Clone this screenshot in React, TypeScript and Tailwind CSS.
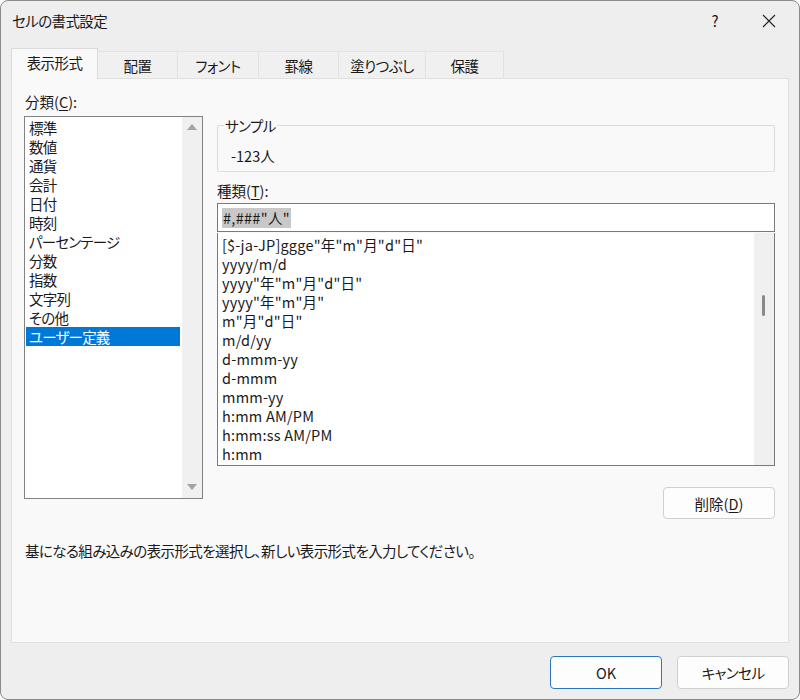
import React from "react";

const categories = [
  "標準",
  "数値",
  "通貨",
  "会計",
  "日付",
  "時刻",
  "パーセンテージ",
  "分数",
  "指数",
  "文字列",
  "その他",
  "ユーザー定義",
];

const formats = [
  '[$-ja-JP]ggge"年"m"月"d"日"',
  "yyyy/m/d",
  'yyyy"年"m"月"d"日"',
  'yyyy"年"m"月"',
  'm"月"d"日"',
  "m/d/yy",
  "d-mmm-yy",
  "d-mmm",
  "mmm-yy",
  "h:mm AM/PM",
  "h:mm:ss AM/PM",
  "h:mm",
];

const tabs = [
  { label: "配置", w: "w-[80px]" },
  { label: "フォント", w: "w-[81px]" },
  { label: "罫線", w: "w-[80px]" },
  { label: "塗りつぶし", w: "w-[87px]" },
  { label: "保護", w: "w-[78px]" },
];

function UpArrow() {
  return (
    <svg width="10" height="6" viewBox="0 0 10 6">
      <path d="M0 6 L5 0 L10 6 Z" fill="#a3a3a3" />
    </svg>
  );
}

function DownArrow() {
  return (
    <svg width="10" height="6" viewBox="0 0 10 6">
      <path d="M0 0 L10 0 L5 6 Z" fill="#a3a3a3" />
    </svg>
  );
}

export default function App() {
  return (
    <div className="w-[800px] h-[700px] bg-[#eeeeee] rounded-[8px] border border-[#8a8a8a] overflow-hidden flex flex-col text-[14.5px] leading-[19px] text-[#1a1a1a] font-['Noto_Sans_CJK_JP','Noto_Sans',sans-serif] [font-feature-settings:'palt']">
      {/* Title bar */}
      <div className="h-[39px] flex items-center pl-[11px] shrink-0">
        <span className="tracking-[-0.6px]">セルの書式設定</span>
        <div className="flex-1" />
        <span className="w-[20px] text-center mr-[37px] text-[15px]">?</span>
        <svg width="14" height="14" viewBox="0 0 14 14" className="mr-[23px]">
          <path d="M1 1 L13 13 M13 1 L1 13" stroke="#222" strokeWidth="1.1" />
        </svg>
      </div>

      {/* Tabs */}
      <div className="h-[38px] flex items-end pl-[10px] shrink-0 tracking-[-0.6px]">
        <div className="relative z-10 h-[31px] mb-[-1px] w-[87px] bg-[#f9f9f9] border border-b-0 border-[#dcdcdc] flex items-center justify-center pb-[3px]">
          表示形式
        </div>
        {tabs.map((t) => (
          <div
            key={t.label}
            className={`h-[27px] ${t.w} bg-[#f0f0f0] border-t border-r border-[#e2e2e2] flex items-center justify-center pt-[1px]`}
          >
            {t.label}
          </div>
        ))}
      </div>

      {/* Panel */}
      <div className="mx-[10px] h-[565px] shrink-0 bg-[#f9f9f9] border border-[#dfdfdf] pt-[13px] pl-[12px] flex flex-col">
        <div className="flex gap-[14px]">
          {/* Left column */}
          <div className="w-[179px] flex flex-col">
            <div className="h-[19px] pl-[1px]">
              分類(<span className="underline underline-offset-2">C</span>):
            </div>
            <div className="mt-[5px] h-[383px] bg-white border border-[#828282] flex">
              <div className="flex-1 pt-[1px] pl-[1px] pr-[2px] tracking-[-0.8px]">
                {categories.map((c, i) => (
                  <div
                    key={c}
                    className={`h-[19px] pl-[3px] ${
                      i === categories.length - 1 ? "bg-[#0078d7] text-white" : ""
                    }`}
                  >
                    {c}
                  </div>
                ))}
              </div>
              <div className="w-[20px] bg-[#f0f0f0] flex flex-col items-center justify-between pt-[7px] pb-[8px]">
                <UpArrow />
                <DownArrow />
              </div>
            </div>
          </div>

          {/* Right column */}
          <div className="w-[558px] flex flex-col pt-[24px]">
            <fieldset className="border border-[#dcdcdc] rounded-[2px]">
              <legend className="ml-[6px] px-[1px] h-[19px] tracking-[-0.6px]">サンプル</legend>
              <div className="h-[36px] pt-[11px] pl-[13px]">-123人</div>
            </fieldset>
            <div className="mt-[9px] h-[19px]">
              種類(<span className="underline underline-offset-2">T</span>):
            </div>
            <div className="mt-[3px] h-[29px] bg-white border border-[#7a7a7a] flex items-center pl-[4px]">
              <span className="bg-[#c8c8c8] px-[1px] h-[20px] leading-[20px] tracking-[0.3px]">#,###"人"</span>
            </div>
            <div className="h-[233px] bg-white border border-[#7a7a7a] border-t-0 mt-[1px] flex overflow-hidden">
              <div className="flex-1 pt-[2px] pl-[4px] overflow-hidden tracking-[0.2px]">
                {formats.map((f) => (
                  <div key={f} className="h-[19px] whitespace-nowrap">
                    {f}
                  </div>
                ))}
              </div>
              <div className="w-[20px] bg-[#f0f0f0] relative">
                <div className="absolute left-[8px] top-[62px] w-[3px] h-[21px] rounded-full bg-[#8a8a8a]" />
              </div>
            </div>
            <div className="flex justify-end mt-[21px]">
              <button className="w-[112px] h-[32px] bg-[#fdfdfd] border border-[#d0d0d0] rounded-[4px] flex items-center justify-center">
                削除(<span className="underline underline-offset-2">D</span>)
              </button>
            </div>
          </div>
        </div>
        <div className="mt-[22px] h-[19px] pl-[1px] tracking-[-0.6px] whitespace-nowrap">
          基になる組み込みの表示形式を選択し、新しい表示形式を入力してください。
        </div>
      </div>

      {/* Footer */}
      <div className="mt-[13px] flex justify-end gap-[15px] pr-[10px]">
        <button className="w-[112px] h-[33px] bg-[#fdfdfd] border border-[#2a77c0] rounded-[4px] flex items-center justify-center">
          OK
        </button>
        <button className="w-[112px] h-[33px] bg-[#fdfdfd] border border-[#d0d0d0] rounded-[4px] flex items-center justify-center tracking-[-0.6px]">
          キャンセル
        </button>
      </div>
    </div>
  );
}
